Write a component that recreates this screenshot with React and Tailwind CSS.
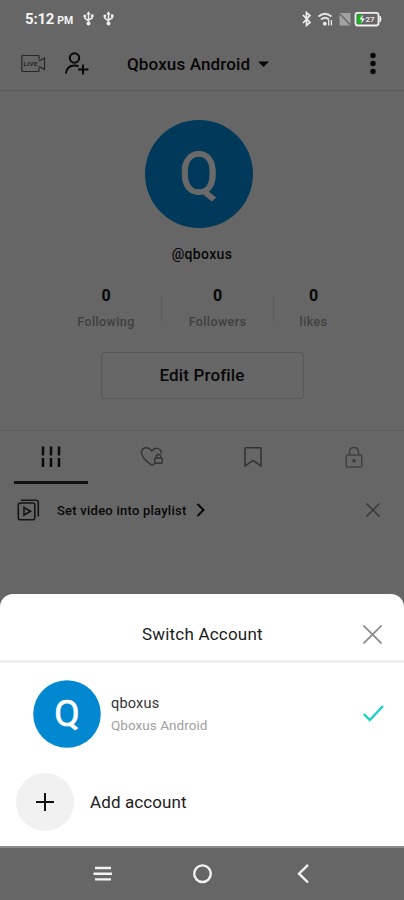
import React from "react";

function Usb() {
  return (
    <svg width="11" height="16" viewBox="0 0 11 16" fill="none" stroke="#ececec" strokeWidth="1.5">
      <path d="M5.5 2v11M1.8 5v2.2L5.5 9.8M9.2 5v2L5.5 9" />
      <path d="M5.5 .3l2.2 3.200h-4.400z" fill="#ececec" stroke="none" />
      <circle cx="1.8" cy="5" r="1.5" fill="#ececec" stroke="none" />
      <rect x="7.9" y="3.4" width="2.700" height="2.700" fill="#ececec" stroke="none" />
      <circle cx="5.5" cy="12.500" r="2" fill="#ececec" stroke="none" />
    </svg>
  );
}

function StatusBar() {
  return (
    <div className="flex h-[38px] items-center pl-[25px] pr-[21px] text-[#f5f5f5]">
      <span className="w-[58px] whitespace-nowrap pt-px text-[15px] font-bold leading-none tracking-[-0.2px]">
        5:12<span className="ml-[3px] text-[10.5px] tracking-normal">PM</span>
      </span>
      <div className="flex gap-[9px]">
        <Usb />
        <Usb />
      </div>
      <svg className="ml-auto" width="82" height="18" viewBox="0 0 82 18" fill="none">
        <path d="M2 5l7 7.500L5.500 15.500v-13L9 5.500 2 13" stroke="#eee" strokeWidth="1.700" />
        <g stroke="#e5e5e5" strokeWidth="1.700">
          <path d="M17.500 6.500q6.500-5.500 13 0M20 9.500q4-3.500 8 0" />
          <path d="M27.700 10v5.500M30.400 10v5.500" strokeWidth="1.300" />
        </g>
        <circle cx="23.800" cy="13.700" r="1.900" fill="#eee" />
        <path d="M38.500 3h11v12.500h-11z" fill="#a2a2a2" />
        <path d="M38.500 3.500l11 11.500" stroke="#666" strokeWidth="1.400" />
        <rect x="54.500" y="2.800" width="23" height="12.700" rx="2.200" stroke="#f0f0f0" strokeWidth="1.800" />
        <path d="M79 6q2.200 3 0 6z" fill="#f0f0f0" stroke="#f0f0f0" />
        <path d="M56.200 4.500h4.300v9.300h-4.300z" fill="#13b51b" />
        <path d="M61.700 4.700l-3.200 4.800H61l-.7 4 3.500-5h-2.500z" fill="#fff" />
        <text x="64.500" y="12" fontSize="8" fontWeight="700" fill="#e2e2e2" fontFamily="Roboto, sans-serif">27</text>
      </svg>
    </div>
  );
}

function Header() {
  return (
    <div className="flex h-[53px] items-center border-b border-[#5a5a5a] pl-[21px] pr-[28px]">
      <svg width="25" height="18" viewBox="0 0 25 18" fill="none" stroke="#272727" strokeWidth="1.200">
        <path d="M18 4.500V1.500q0-1-1-1H2q-1.200 0-1.200 1v14q0 1 1.200 1h15q1 0 1-1v-3" />
        <path d="M18 6l5.500-3v11.500L18 11.500" />
        <text x="2.500" y="11" fontSize="6.200" fontWeight="700" textLength="14" fill="#222" stroke="none" fontFamily="Roboto, sans-serif">LIVE</text>
      </svg>
      <svg className="ml-[18px]" width="26" height="24" viewBox="0 0 26 24" fill="none" stroke="#080808" strokeWidth="2">
        <circle cx="10.500" cy="6" r="4.700" />
        <path d="M1.800 21.500q1.200-8 8.700-8 2.500 0 4 1M19 12.500v10M14 17.500h10.500" />
      </svg>
      <span className="ml-[37px] w-[124px] whitespace-nowrap pt-[2px] text-[17px] font-medium tracking-[0.14px] text-[#060606]">Qboxus Android</span>
      <svg className="ml-[7px]" width="11" height="7" viewBox="0 0 11 7"><path d="M0 .5h11L5.500 6z" fill="#080808" /></svg>
      <svg className="ml-auto" width="6" height="24" viewBox="0 0 6 24" fill="#080808">
        <circle cx="3" cy="3.500" r="2.700" /><circle cx="3" cy="11.500" r="2.700" /><circle cx="3" cy="19.500" r="2.700" />
      </svg>
    </div>
  );
}

function Stat({ label, className }) {
  return (
    <div className={"flex flex-col items-center " + className}>
      <span className="text-[16px] font-bold leading-[20px] text-[#080808]">0</span>
      <span className="mt-[7px] whitespace-nowrap text-[12.500px] font-medium leading-[18px] tracking-[0.4px] text-[#404040]">{label}</span>
    </div>
  );
}

function Profile() {
  return (
    <div className="flex h-[340px] flex-col items-center border-b border-[#5d5d5d] pt-[29px]">
      <div className="mr-[6px] flex size-[108px] items-center justify-center rounded-full bg-[#00395a]">
        <svg width="108" height="108" viewBox="0 0 108 108">
          <text x="54" y="73.500" textAnchor="middle" fontSize="60" fontWeight="400" fill="#6a6a6a" stroke="#6a6a6a" strokeWidth="0.800" textLength="40" lengthAdjust="spacingAndGlyphs" fontFamily="Roboto, sans-serif">Q</text>
        </svg>
      </div>
      <div className="mt-[16px] text-[14px] font-medium leading-[20px] tracking-[0.35px] text-[#080808]">@qboxus</div>
      <div className="mt-[22px] flex w-full pl-[51px]">
        <Stat label="Following" className="w-[110px]" />
        <div className="mt-[9px] h-[28px] w-px bg-[#5c5c5c]" />
        <Stat label="Followers" className="w-[111px]" />
        <div className="mt-[9px] h-[28px] w-px bg-[#5c5c5c]" />
        <Stat label="likes" className="w-[79px]" />
      </div>
      <div className="mt-[21px] flex h-[47px] w-[203px] items-center justify-center rounded-[3px] border border-[#575757] pt-px text-[17px] font-medium tracking-[0.15px] text-[#080808]">
        Edit Profile
      </div>
    </div>
  );
}

function Tabs() {
  return (
    <div className="grid h-[53px] grid-cols-4 pt-[14px]">
      <div className="flex flex-col items-center">
        <svg width="22" height="24" viewBox="0 0 22 24" stroke="#0b0b0b" strokeWidth="2.500">
          <path d="M3 1.500v9M11 1.500v9M19 1.500v9M3 13v9M11 13v9M19 13v9" />
        </svg>
        <div className="mt-auto h-[3px] w-[74px] bg-[#111]" />
      </div>
      <div className="flex justify-center pt-px">
        <svg width="24" height="22" viewBox="0 0 24 22" fill="none" stroke="#333" strokeWidth="1.400">
          <path d="M12 19.500Q1 11.500 1.500 6.500C2 .5 9 .5 11.800 5 15 .5 21 1.500 21.500 7.500M12 19.500l3-2" />
          <rect x="14.700" y="12" width="7.600" height="5.300" rx="1" />
          <path d="M16.200 12v-1.500q0-2 2.300-2t2.300 2V12" />
        </svg>
      </div>
      <div className="flex justify-center pt-[2px]">
        <svg width="18" height="20" viewBox="0 0 18 20" fill="none" stroke="#323232" strokeWidth="1.500">
          <path d="M1 1.500q0-.7.700-.7h14.600q.7 0 .7.700v17.500L9 13.300 1 19z" />
        </svg>
      </div>
      <div className="flex justify-center pt-px">
        <svg width="18" height="23" viewBox="0 0 18 23" fill="none" stroke="#404040" strokeWidth="1.500">
          <rect x="1.200" y="9" width="15.600" height="12" rx="1.500" />
          <path d="M4.500 9V6q0-4.500 4.500-4.500T13.500 6v3" />
          <circle cx="9" cy="14.800" r="1.700" fill="#383838" stroke="none" />
        </svg>
      </div>
    </div>
  );
}

function PlaylistRow() {
  return (
    <div className="flex h-[52px] items-center pl-[17px] pr-[24px]">
      <svg width="24" height="22" viewBox="0 0 24 22" fill="none" stroke="#151515" strokeWidth="1.600">
        <rect x="1.300" y="4" width="16.500" height="16.700" rx="2" />
        <path d="M4 1.200h15q2.300 0 2.300 2.300v14" />
        <path d="M7 8.500v7.500l6.500-3.700z" />
      </svg>
      <span className="ml-[16px] w-[131px] whitespace-nowrap pt-px text-[13px] font-medium tracking-[0.24px] text-[#080808]">Set video into playlist</span>
      <svg className="ml-[8px]" width="10" height="14" viewBox="0 0 10 14" fill="none" stroke="#080808" strokeWidth="2"><path d="M1.500 1l6 6-6 6" /></svg>
      <svg className="ml-auto" width="14" height="14" viewBox="0 0 14 14" stroke="#343434" strokeWidth="1.400"><path d="M.5.5l13 13M13.500.5l-13 13" /></svg>
    </div>
  );
}

function AccountSheet() {
  return (
    <div className="mt-auto flex h-[252px] shrink-0 flex-col rounded-t-[13px] bg-white">
      <div className="flex h-[69px] items-center border-b-[3px] border-[#f0f0f0] pl-[142px] pr-[22px] pt-[15px]">
        <span className="whitespace-nowrap pt-px text-[17px] tracking-[0.2px] text-[#1b1b1b]">Switch Account</span>
        <svg className="ml-auto" width="19" height="19" viewBox="0 0 19 19" stroke="#888" strokeWidth="1.600"><path d="M.5.5l18 18M18.500.5l-18 18" /></svg>
      </div>
      <div className="flex h-[101px] items-center pl-[33px] pr-[20px]">
        <svg width="68" height="68" viewBox="0 0 68 68">
          <circle cx="34" cy="34" r="33.800" fill="#0288d1" />
          <text x="34" y="46" textAnchor="middle" fontSize="37" fontWeight="400" fill="#fff" stroke="#fff" strokeWidth="0.700" fontFamily="Roboto, sans-serif">Q</text>
        </svg>
        <div className="ml-[10px] flex flex-col pt-px">
          <span className="text-[14.500px] leading-[20px] tracking-[0.2px] text-[#333]">qboxus</span>
          <span className="mt-px whitespace-nowrap text-[13.500px] leading-[20px] tracking-[0.05px] text-[#a0a0a0]">Qboxus Android</span>
        </div>
        <svg className="ml-auto" width="21" height="17" viewBox="0 0 21 17" fill="none" stroke="#18d0c4" strokeWidth="2.300"><path d="M.8 9l6 6L20 1" /></svg>
      </div>
      <div className="flex h-[76px] items-center pl-[16px]">
        <div className="flex size-[58px] items-center justify-center rounded-full bg-[#f1f1f1]">
          <svg width="18" height="18" viewBox="0 0 18 18" stroke="#111" strokeWidth="2"><path d="M9 0v18M0 9h18" /></svg>
        </div>
        <span className="ml-[16px] pt-px text-[17px] tracking-[0.1px] text-[#202020]">Add account</span>
      </div>
    </div>
  );
}

function NavBar() {
  return (
    <div className="flex h-[54px] shrink-0 items-center justify-center border-t-2 border-[#8c8c8c]">
      <svg width="220" height="20" viewBox="0 0 220 20" fill="none" stroke="#f2f2f2" strokeWidth="2.400">
        <path d="M3 4h16M1.500 9.700h18.500M3 15.400h16" />
        <circle cx="110.500" cy="9.700" r="8.300" />
        <path d="M216 .9L207 9.700l9 8.800" />
      </svg>
    </div>
  );
}

export default function App() {
  return (
    <div className="flex h-[900px] w-[404px] flex-col overflow-hidden bg-[#666] font-['Roboto',sans-serif]">
      <StatusBar />
      <Header />
      <Profile />
      <Tabs />
      <PlaylistRow />
      <AccountSheet />
      <NavBar />
    </div>
  );
}
